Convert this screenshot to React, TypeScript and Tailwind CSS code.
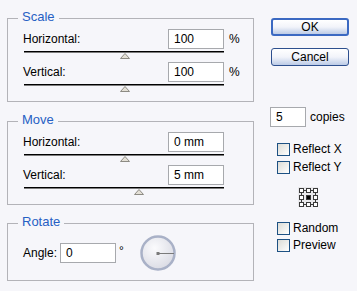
import React from 'react';

const FONT = { fontFamily: '"Liberation Sans", Arial, sans-serif' };

function Field({ value, width = 'w-[56px]' }: { value: string; width?: string }) {
  return (
    <div className={`${width} h-[20px] border border-[#a7a9ad] bg-white pl-[5px] leading-[18px] text-[12px]`}>
      {value}
    </div>
  );
}

function Slider({ offset }: { offset: string }) {
  return (
    <div className="ml-[16px] w-[200px]">
      <div className="h-px bg-black" />
      <div className="h-px bg-[#7c7c7c]" />
      <div className={offset}>
        <svg width="10" height="6" viewBox="0 0 10 6" className="block">
          <polygon points="5,0.5 0.5,5.5 9.5,5.5" fill="#e4e0d6" stroke="#8d8b84" strokeWidth="1" />
        </svg>
      </div>
    </div>
  );
}

function Group({ title, children, className = '' }: { title: string; children: React.ReactNode; className?: string }) {
  return (
    <div className={`border border-[#b3b3b8] ${className}`}>
      <span className="block w-fit ml-[10px] -mt-[9px] px-[4px] h-[14px] leading-[14px] text-[13px] bg-[#f6f6fa] text-[#2660c4]">
        {title}
      </span>
      {children}
    </div>
  );
}

function Row({ label, value, unit }: { label: string; value: string; unit?: string }) {
  return (
    <div className="flex items-center h-[20px] pl-[15px]">
      <span className="w-[145px]">{label}</span>
      <Field value={value} />
      {unit && <span className="ml-[5px]">{unit}</span>}
    </div>
  );
}

function Check({ label, className = '' }: { label: string; className?: string }) {
  return (
    <div className={`flex items-center h-[13px] pl-[7px] ${className}`}>
      <span className="w-[13px] h-[13px] border border-[#1d5183] bg-linear-to-br from-[#dcdcd6] to-white" />
      <span className="ml-[3px] leading-[13px]">{label}</span>
    </div>
  );
}

function XpButton({ label, isDefault, className = '' }: { label: string; isDefault?: boolean; className?: string }) {
  return (
    <div
      className={`ml-[1px] w-[78px] h-[18px] rounded-[3px] flex items-center justify-center leading-none bg-linear-to-b from-white via-[#f2f4fa] to-[#bccbe6] ${
        isDefault ? 'border-2 border-[#3b69c2]' : 'border border-[#2d4f8e]'
      } ${className}`}
    >
      {label}
    </div>
  );
}

function RefPoint() {
  const pos = [1, 8, 15];
  return (
    <svg width="20" height="20" viewBox="0 0 20 20" className="block">
      <rect x="0" y="0" width="20" height="20" fill="#e9e9ec" />
      <g stroke="#3a3a3a" strokeWidth="1" fill="none">
        <line x1="5" y1="3.5" x2="8" y2="3.5" />
        <line x1="12" y1="3.5" x2="15" y2="3.5" />
        <line x1="5" y1="17.5" x2="8" y2="17.5" />
        <line x1="12" y1="17.5" x2="15" y2="17.5" />
        <line x1="3.5" y1="5" x2="3.5" y2="8" />
        <line x1="3.5" y1="12" x2="3.5" y2="15" />
        <line x1="17.5" y1="5" x2="17.5" y2="8" />
        <line x1="17.5" y1="12" x2="17.5" y2="15" />
      </g>
      {pos.map((y) =>
        pos.map((x) => {
          const center = x === 8 && y === 8;
          return (
            <rect
              key={`${x}-${y}`}
              x={x + 0.5}
              y={y + 0.5}
              width="4"
              height="4"
              fill={center ? '#000' : '#fff'}
              stroke="#3a3a3a"
              strokeWidth="1"
            />
          );
        })
      )}
    </svg>
  );
}

function Dial() {
  return (
    <svg width="36" height="36" viewBox="0 0 36 36" className="block ml-[16px]">
      <defs>
        <radialGradient id="dialFill" cx="0.4" cy="0.35" r="0.7">
          <stop offset="0" stopColor="#fbfbfd" />
          <stop offset="1" stopColor="#d9dae3" />
        </radialGradient>
      </defs>
      <circle cx="18" cy="18" r="16.5" fill="url(#dialFill)" stroke="#a9b1c7" strokeWidth="2.5" />
      <line x1="18" y1="18.5" x2="34" y2="18.5" stroke="#7a7a7a" strokeWidth="1" />
      <rect x="16.5" y="17" width="3" height="3" fill="#7a7a7a" />
    </svg>
  );
}

export default function App() {
  return (
    <div className="w-[357px] h-[291px] bg-[#f6f6fa] flex text-[12px] text-black overflow-hidden" style={FONT}>
      {/* Left column */}
      <div className="pl-[7px] pt-[18px] w-[254px] flex flex-col">
        <Group title="Scale" className="pb-[9px]">
          <div className="mt-[5px]">
            <Row label="Horizontal:" value="100" unit="%" />
          </div>
          <div className="mt-[2px]">
            <Slider offset="ml-[96px]" />
          </div>
          <div className="mt-[3px]">
            <Row label="Vertical:" value="100" unit="%" />
          </div>
          <div className="mt-[2px]">
            <Slider offset="ml-[96px]" />
          </div>
        </Group>

        <Group title="Move" className="mt-[19px] pb-[9px]">
          <div className="mt-[5px]">
            <Row label="Horizontal:" value="0 mm" />
          </div>
          <div className="mt-[2px]">
            <Slider offset="ml-[96px]" />
          </div>
          <div className="mt-[3px]">
            <Row label="Vertical:" value="5 mm" />
          </div>
          <div className="mt-[2px]">
            <Slider offset="ml-[110px]" />
          </div>
        </Group>

        <Group title="Rotate" className="mt-[18px] pb-[9px]">
          <div className="mt-[6px] flex items-center h-[36px] pl-[15px]">
            <span className="w-[37px]">Angle:</span>
            <Field value="0" />
            <span className="ml-[3px] self-start mt-[10px] leading-none">°</span>
            <Dial />
          </div>
        </Group>
      </div>

      {/* Right column */}
      <div className="ml-[16px] pt-[18px] w-[87px] flex flex-col">
        <XpButton label="OK" isDefault />
        <XpButton label="Cancel" className="mt-[12px]" />

        <div className="mt-[41px] flex items-center h-[20px]">
          <Field value="5" width="w-[36px]" />
          <span className="ml-[4px]">copies</span>
        </div>

        <Check label="Reflect X" className="mt-[16px]" />
        <Check label="Reflect Y" className="mt-[5px]" />

        <div className="mt-[13px] ml-[28px]">
          <RefPoint />
        </div>

        <Check label="Random" className="mt-[15px]" />
        <Check label="Preview" className="mt-[4px]" />
      </div>
    </div>
  );
}
